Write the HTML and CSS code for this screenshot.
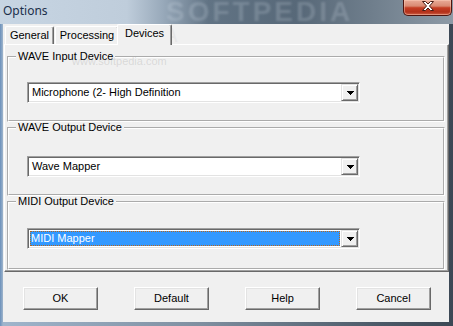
FILE: index.html
```html
<!DOCTYPE html>
<html>
<head>
<meta charset="utf-8">
<title>Options</title>
<link rel="stylesheet" href="styles.css">
</head>
<body>
<div class="window">
  <div class="titlebar">
    <span class="title">Options</span>
    <span class="wm wm-title">SOFTPEDIA</span>
    <div class="close">
      <svg width="12" height="10" viewBox="0 0 12 10"><polygon points="0.5,0.5 3.5,0.5 6,3 8.5,0.5 11.5,0.5 7.5,5 11.5,9.5 8.5,9.5 6,7 3.5,9.5 0.5,9.5 4.5,5" fill="#fff" stroke="#4a1c14" stroke-width="1"/></svg>
    </div>
  </div>
  <div class="client">
    <div class="tabs">
      <div class="tab t-general">General</div>
      <div class="tab t-processing">Processing</div>
      <div class="tab t-devices active">Devices</div>
    </div>
    <div class="panel">
      <div class="group g1">
        <div class="legend">WAVE Input Device</div>
        <div class="combo">
          <div class="field">Microphone (2- High Definition</div>
          <div class="drop"><svg width="7" height="4" viewBox="0 0 7 4" shape-rendering="crispEdges"><rect x="0" y="0" width="7" height="1"/><rect x="1" y="1" width="5" height="1"/><rect x="2" y="2" width="3" height="1"/><rect x="3" y="3" width="1" height="1"/></svg></div>
        </div>
      </div>
      <div class="group g2">
        <div class="legend">WAVE Output Device</div>
        <div class="combo">
          <div class="field">Wave Mapper</div>
          <div class="drop"><svg width="7" height="4" viewBox="0 0 7 4" shape-rendering="crispEdges"><rect x="0" y="0" width="7" height="1"/><rect x="1" y="1" width="5" height="1"/><rect x="2" y="2" width="3" height="1"/><rect x="3" y="3" width="1" height="1"/></svg></div>
        </div>
      </div>
      <div class="group g3">
        <div class="legend">MIDI Output Device</div>
        <div class="combo">
          <div class="field sel">MIDI Mapper</div>
          <div class="drop"><svg width="7" height="4" viewBox="0 0 7 4" shape-rendering="crispEdges"><rect x="0" y="0" width="7" height="1"/><rect x="1" y="1" width="5" height="1"/><rect x="2" y="2" width="3" height="1"/><rect x="3" y="3" width="1" height="1"/></svg></div>
        </div>
      </div>
    </div>
    <div class="buttons">
      <button class="btn">OK</button>
      <button class="btn">Default</button>
      <button class="btn">Help</button>
      <button class="btn">Cancel</button>
    </div>
  </div>
  <span class="wm wm-tabs">SOFTPEDIA</span>
  <span class="wm wm-url">www.softpedia.com</span>
</div>
</body>
</html>
```

FILE: styles.css
```css
* { box-sizing: border-box; }
html, body { margin: 0; padding: 0; }
body {
  width: 453px;
  height: 326px;
  overflow: hidden;
  font-family: "Liberation Sans", Arial, sans-serif;
  font-size: 11px;
  color: #000;
}
.window {
  position: relative;
  width: 453px;
  height: 326px;
  display: flex;
  flex-direction: column;
  background: linear-gradient(90deg, #6b90bb 0px, #9fb5cc 3px, #7f8fa0 200px, #4b5967 380px, #3c4855 453px);
}
.titlebar {
  position: relative;
  height: 24px;
  display: flex;
  align-items: flex-start;
  background: linear-gradient(90deg, #c7d5e3 0%, #bfcddb 28%, #98a9ba 36%, #617384 46%, #576878 66%, #6f7e8c 82%, #8d9aa6 100%);
}
.title {
  font-family: "Noto Sans", "Open Sans", sans-serif;
  font-size: 12px;
  line-height: 16px;
  color: #1b2f4a;
  padding: 3px 0 0 3px;
}
.close {
  margin-left: auto;
  margin-right: 1px;
  width: 49px;
  height: 16px;
  border: 1px solid #4d1510;
  border-top: none;
  border-radius: 0 0 5px 5px;
  background: linear-gradient(#e9ab98 0%, #d98a73 40%, #c43e24 52%, #b3301a 80%, #cf6248 100%);
  box-shadow: inset 0 0 0 1px rgba(255, 210, 190, 0.45);
  display: flex;
  justify-content: center;
  align-items: flex-start;
  padding-top: 1px;
  position: relative;
  z-index: 1;
}
.close svg { display: block; }

.client {
  flex: 1;
  margin: 0 4px 4px 3px;
  background: #f0f0f0;
  display: flex;
  flex-direction: column;
}
.tabs {
  position: relative;
  z-index: 1;
  height: 20px;
  display: flex;
  align-items: flex-end;
  padding-left: 2px;
}
.tab {
  height: 18px;
  background: #f0f0f0;
  border: 1px solid;
  border-bottom: none;
  border-color: #fff #696969 #f0f0f0 #fff;
  border-radius: 2px 2px 0 0;
  box-shadow: inset -1px 0 #a0a0a0;
  text-align: center;
  line-height: 13px;
  padding-top: 2px;
  white-space: nowrap;
}
.t-general { width: 49px; margin-right: 1px; }
.t-processing { width: 64px; }
.t-devices { width: 55px; margin-left: -2px; }
.tab.active {
  height: 21px;
  margin-bottom: -1px;
}
.panel {
  height: 228px;
  margin-left: 1px;
  border: 1px solid;
  border-color: #fff #696969 #696969 #fff;
  box-shadow: inset -1px -1px #a0a0a0;
  padding: 11px 3px 0 2px;
  display: flex;
  flex-direction: column;
  gap: 5px;
}
.group {
  flex-shrink: 0;
  border: 2px groove #fff;
}
.legend {
  width: max-content;
  margin: -7px 0 0 7px;
  padding: 0 2px;
  line-height: 11px;
  background: #f0f0f0;
  white-space: nowrap;
}
.g1 { height: 66px; }
.g2 { height: 69px; }
.g3 { height: 69px; }
.g1 .combo { margin-top: 20px; }
.g2 .combo { margin-top: 23px; }
.g3 .combo { margin-top: 21px; }

.combo {
  width: 333px;
  height: 21px;
  margin-left: 18px;
  display: flex;
  border: 1px solid;
  border-color: #a0a0a0 #fff #fff #a0a0a0;
  padding: 1px;
  background: #fff;
  box-shadow: inset 1px 1px #696969, inset -1px -1px #e3e3e3;
}
.field {
  flex: 1;
  line-height: 17px;
  padding-left: 3px;
  white-space: nowrap;
  overflow: hidden;
}
.field.sel {
  margin: 1px;
  padding-left: 0;
  line-height: 13px;
  background: #3399ff;
  color: #fff;
  border: 1px dotted #b8661c;
}
.drop {
  width: 17px;
  height: 17px;
  border: 1px solid;
  border-color: #e3e3e3 #696969 #696969 #e3e3e3;
  box-shadow: inset 1px 1px #fff, inset -1px -1px #a0a0a0;
  background: #f0f0f0;
  display: flex;
  align-items: center;
  justify-content: center;
  padding: 1px 0 0 1px;
}
.drop svg { display: block; fill: #000; }

.buttons {
  display: flex;
  gap: 36px;
  padding: 15px 0 0 20px;
}
.btn {
  width: 75px;
  height: 23px;
  margin: 0;
  padding: 0;
  font: inherit;
  color: #000;
  background: #f0f0f0;
  border: 1px solid;
  border-color: #fff #696969 #696969 #fff;
  box-shadow: inset -1px -1px #a0a0a0, inset 1px 1px #e3e3e3;
  text-align: center;
  line-height: 21px;
}

.wm {
  position: absolute;
  white-space: nowrap;
  pointer-events: none;
}
.wm-title {
  left: 166px;
  top: 1px;
  font-size: 28px;
  line-height: 22px;
  font-weight: bold;
  letter-spacing: 3px;
  color: rgba(220, 230, 240, 0.2);
  filter: blur(1px);
}
.wm-tabs {
  left: 56px;
  top: 25px;
  font-size: 20px;
  line-height: 20px;
  font-weight: bold;
  letter-spacing: 1px;
  color: rgba(120, 120, 120, 0.06);
}
.wm-url {
  left: 72px;
  top: 55px;
  font-size: 11px;
  line-height: 12px;
  color: rgba(160, 160, 160, 0.3);
}
```
